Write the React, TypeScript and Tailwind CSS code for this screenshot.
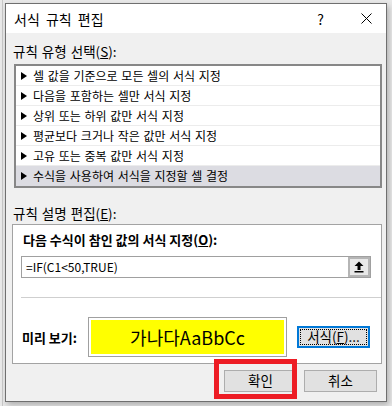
import type { ReactNode } from 'react';

const rules = [
  '셀 값을 기준으로 모든 셀의 서식 지정',
  '다음을 포함하는 셀만 서식 지정',
  '상위 또는 하위 값만 서식 지정',
  '평균보다 크거나 작은 값만 서식 지정',
  '고유 또는 중복 값만 서식 지정',
  '수식을 사용하여 서식을 지정할 셀 결정',
];

function Arrow() {
  return (
    <svg width="6" height="8" viewBox="0 0 6 8" className="shrink-0">
      <polygon points="0,0 6,4 0,8" fill="#000" />
    </svg>
  );
}

function Button({ children, className = '' }: { children: ReactNode; className?: string }) {
  return (
    <div
      className={`flex h-[22px] w-[73px] items-center justify-center border border-[#adadad] bg-[#e1e1e1] text-[13.5px] leading-none text-black ${className}`}
    >
      {children}
    </div>
  );
}

export default function App() {
  const selected = 5;

  return (
    <div className="relative h-[406px] w-[392px] overflow-hidden bg-[#e9e9e9] bg-[linear-gradient(to_right,transparent_2px,#c8c8c8_2px,#c8c8c8_3px,transparent_3px)] pl-[5px] pt-[3px] font-['Noto_Sans_CJK_KR',sans-serif] text-black">
      {/* Dialog */}
      <div className="relative h-[399px] w-[382px] border border-[#6f6f6f] bg-[#f0f0f0] shadow-[2px_3px_6px_rgba(0,0,0,0.25)]">
        {/* Title bar */}
        <div className="flex h-[29px] items-center bg-white pl-[8px]">
          <span className="text-[14px] leading-none [word-spacing:3px]">서식 규칙 편집</span>
          <span className="ml-auto mr-[37px] text-[14px] leading-none">?</span>
          <svg width="11" height="11" viewBox="0 0 11 11" className="mr-[14px]">
            <path d="M0.5 0.5 L10.5 10.5 M10.5 0.5 L0.5 10.5" stroke="#000" strokeWidth="1" />
          </svg>
        </div>

        {/* Rule type */}
        <div className="mt-[8px] pl-[7px] text-[13.5px] leading-[20px] [word-spacing:1px]">
          규칙 유형 선택(<span className="underline">S</span>):
        </div>
        <div className="ml-[8px] mt-[3px] w-[368px] border-2 border-[#878787] bg-white">
          {rules.map((r, i) => (
            <div
              key={r}
              className={`flex h-[20px] items-center gap-[6px] border-b border-[#ececec] pl-[5px] text-[12px] leading-none last:border-b-0 [word-spacing:1px] ${
                i === selected ? 'bg-[#dcdce2]' : ''
              }`}
            >
              <Arrow />
              <span>{r}</span>
            </div>
          ))}
        </div>

        {/* Rule description */}
        <div className="mt-[15px] pl-[7px] text-[13.5px] leading-[20px] [word-spacing:1px]">
          규칙 설명 편집(<span className="underline">E</span>):
        </div>
        <div className="ml-[6px] mt-[1px] w-[370px] border border-[#a3a3a3] bg-white pb-[6px] pt-[6px]">
          <div className="pl-[10px] text-[13px] font-bold leading-[18px]">
            다음 수식이 참인 값의 서식 지정(<span className="underline">O</span>):
          </div>
          <div className="ml-[8px] mt-[7px] flex h-[22px] w-[350px] items-stretch border border-[#a0a0a0]">
            <div className="flex flex-1 items-center pl-[4px] text-[12px] leading-none">=IF(C1&lt;50,TRUE)</div>
            <div className="flex w-[22px] items-center justify-center border-2 border-[#b5b5b5] bg-[#e8e8e8]">
              <svg width="10" height="12" viewBox="0 0 10 12">
                <polygon points="5,0.5 9.5,5 6.5,5 6.5,9 3.5,9 3.5,5 0.5,5" fill="#000" />
                <rect x="0.5" y="10" width="9" height="1.5" fill="#000" />
              </svg>
            </div>
          </div>
          <div className="ml-[8px] mt-[19px] h-px bg-[#cfcfcf]" />
          <div className="mt-[19px] flex items-center pl-[9px]">
            <div className="w-[66px] text-[13px] font-bold leading-none">미리 보기:</div>
            <div className="h-[40px] w-[199px] border border-[#a0a0a0] bg-white p-[2px]">
              <div className="flex h-full items-center justify-center bg-[#ffff00] text-[18px] leading-none">
                가나다AaBbCc
              </div>
            </div>
            <div className="ml-[10px] flex h-[22px] w-[73px] items-center justify-center border-2 border-[#0078d7] bg-[#e1e1e1] p-[1px]">
              <div className="flex h-full w-full items-center justify-center border border-dotted border-black text-[13.5px] leading-none">
                서식(<span className="underline">F</span>)...
              </div>
            </div>
          </div>
        </div>

        {/* Footer */}
        <div className="mt-[6px] flex justify-end gap-[7px] pr-[9px]">
          <Button>확인</Button>
          <Button>취소</Button>
        </div>

        {/* Red highlight annotation */}
        <div className="absolute left-[208px] top-[355px] h-[40px] w-[83px] border-[5px] border-[#ed1c24]" />
      </div>
    </div>
  );
}
